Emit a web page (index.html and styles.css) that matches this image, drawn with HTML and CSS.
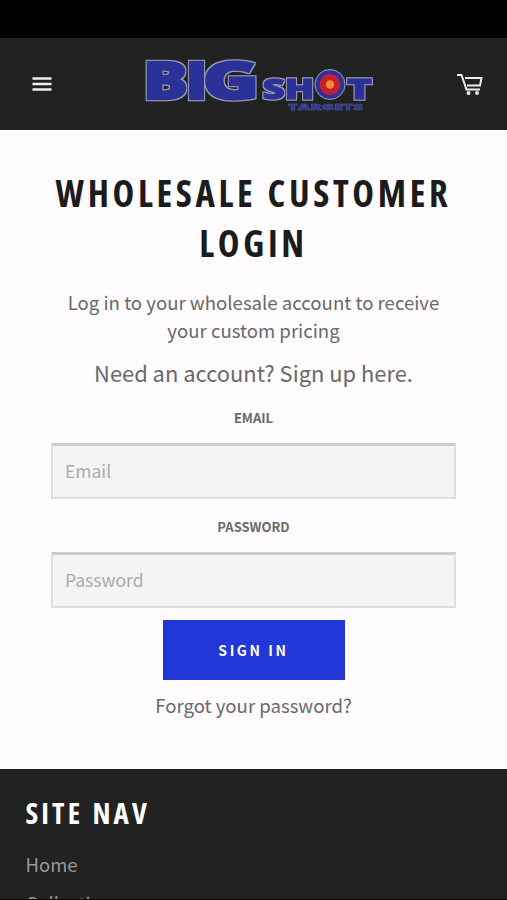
FILE: index.html
```html
<!DOCTYPE html>
<html lang="en">
<head>
<meta charset="utf-8">
<title>Wholesale Customer Login</title>
<link rel="stylesheet" href="styles.css">
</head>
<body>
<div class="status-bar"></div>
<header class="header">
  <button class="icon-button" aria-label="Menu">
    <svg class="menu-icon" width="20" height="16" viewBox="0 0 20 16"><path d="M.5 2.5h19M.5 8h19M.5 13.500h19"/></svg>
  </button>
  <svg class="logo" width="232" height="56" viewBox="0 0 232 56">
    <defs>
      <filter id="rim" x="-5%" y="-10%" width="110%" height="120%">
        <feMorphology in="SourceAlpha" operator="dilate" radius=".7" result="grown"/>
        <feFlood flood-color="#9a9eb8"/>
        <feComposite in2="grown" operator="in" result="edge"/>
        <feMerge><feMergeNode in="edge"/><feMergeNode in="SourceGraphic"/></feMerge>
      </filter>
    </defs>
    <g class="logo-text" filter="url(#rim)">
      <text class="big" x="0" y="42.500" textLength="45" lengthAdjust="spacingAndGlyphs">B</text>
      <text class="big" x="42.500" y="42.500" textLength="22" lengthAdjust="spacingAndGlyphs">I</text>
      <text class="big" x="60" y="42.500" textLength="56" lengthAdjust="spacingAndGlyphs">G</text>
      <text class="shot" x="119.500" y="43" textLength="52" lengthAdjust="spacingAndGlyphs">SH</text>
      <text class="shot" x="204" y="43" textLength="25" lengthAdjust="spacingAndGlyphs">T</text>
    </g>
    <text class="targets" x="145" y="53.500" textLength="75" lengthAdjust="spacingAndGlyphs">TARGETS</text>
    <circle cx="187" cy="28.500" r="15" fill="#2c329a" stroke="#9ba3c6"/>
    <circle cx="187" cy="28.500" r="10.500" fill="#c51f32"/>
    <circle cx="187" cy="28.500" r="4.200" fill="#f58a2c"/>
  </svg>
  <button class="icon-button" aria-label="Cart">
    <svg class="cart-icon" width="26" height="23" viewBox="0 0 26 23"><path d="M0 2h4.500l5 14.500H23M8 5h16.500l-1.500 7.500H10"/><circle cx="11.500" cy="20" r="2"/><circle cx="20" cy="20" r="2"/></svg>
  </button>
</header>
<main class="login">
  <h1>Wholesale Customer Login</h1>
  <p class="intro">Log in to your wholesale account to receive your custom pricing</p>
  <p class="signup">Need an account? Sign up here.</p>
  <form>
    <label for="email">Email</label>
    <input id="email" type="email" placeholder="Email">
    <label for="password">Password</label>
    <input id="password" type="password" placeholder="Password">
    <button class="submit" type="button">Sign In</button>
  </form>
  <a class="forgot">Forgot your password?</a>
</main>
<footer class="footer">
  <h2>Site Nav</h2>
  <ul><li>Home</li><li>Collections</li></ul>
</footer>
</body>
</html>
```
FILE: styles.css
```css
* { box-sizing: border-box; }
html, body { height: 900px; overflow: hidden; }
body {
  margin: 0;
  display: flex;
  flex-direction: column;
  background: #fefcfe;
  color: #6a696a;
  font-family: "Noto Sans CJK SC", "Noto Sans", sans-serif;
}
.status-bar { height: 38px; flex: none; background: #000; }
.header {
  height: 92px;
  flex: none;
  display: flex;
  align-items: center;
  justify-content: space-between;
  padding: 0 24px 0 32px;
  background: #222;
}
.icon-button { display: flex; padding: 0; border: 0; background: none; }
.menu-icon { fill: none; stroke: #eee; stroke-width: 2.4; }
.cart-icon path { fill: none; stroke: #eee; stroke-width: 2; }
.cart-icon circle { fill: #eee; }
.logo { margin-left: 9px; overflow: visible; }
.logo-text, .targets {
  font-family: "Open Sans", sans-serif;
  font-weight: 800;
  fill: #2c329a;
  stroke: #2c329a;
}
.big { font-size: 51px; stroke-width: 2.4; }
.shot { font-size: 29px; stroke-width: 1.3; }
.targets { font-size: 8px; stroke: #5b62a8; stroke-width: .3; }
.login {
  height: 639px;
  flex: none;
  padding: 38px 51px 0;
  display: flex;
  flex-direction: column;
  align-items: center;
  text-align: center;
}
h1, h2 {
  margin: 0;
  font-family: "Open Sans", sans-serif;
  font-stretch: 75%;
  font-weight: 700;
  text-transform: uppercase;
}
h1 { width: 405px; font-size: 36.7px; line-height: 50px; letter-spacing: 3.65px; word-spacing: 1px; color: #1c1c1c; }
p { margin: 0; }
.intro { width: 400px; margin-top: 20px; font-size: 18.6px; line-height: 28px; }
.signup { margin-top: 13px; font-size: 21.9px; line-height: 32px; }
form { width: 405px; margin-top: 1px; display: flex; flex-direction: column; align-items: center; }
label { margin-top: 18px; font-size: 13px; font-weight: 700; line-height: 20px; text-transform: uppercase; }
input {
  width: 405px;
  height: 56px;
  margin-top: 15px;
  padding: 0 12px 3px;
  border: 2px solid #dfdfdf;
  border-top: 3px solid #cdcbcd;
  border-radius: 0;
  background: #f4f4f4;
  font: 17.5px "Noto Sans CJK SC", sans-serif;
}
input::placeholder { color: #aaa; opacity: 1; }
.submit {
  width: 182px;
  height: 60px;
  margin-top: 12px;
  border: 0;
  background: #2237d8;
  color: #fff;
  font: 700 14px "Noto Sans CJK SC", sans-serif;
  letter-spacing: 2.6px;
  text-transform: uppercase;
}
.forgot { margin-top: 11px; font-size: 18.6px; line-height: 28px; }
.footer { flex: 1; padding: 24px 25.5px 0; background: #222; border-bottom: 1px solid #0c0508; overflow: hidden; }
h2 { font-size: 29px; line-height: 40px; letter-spacing: 3.1px; word-spacing: 1px; color: #fff; }
ul { margin: 12px 0 0; padding: 0; list-style: none; font-size: 18.5px; line-height: 39px; color: #999; }
```
